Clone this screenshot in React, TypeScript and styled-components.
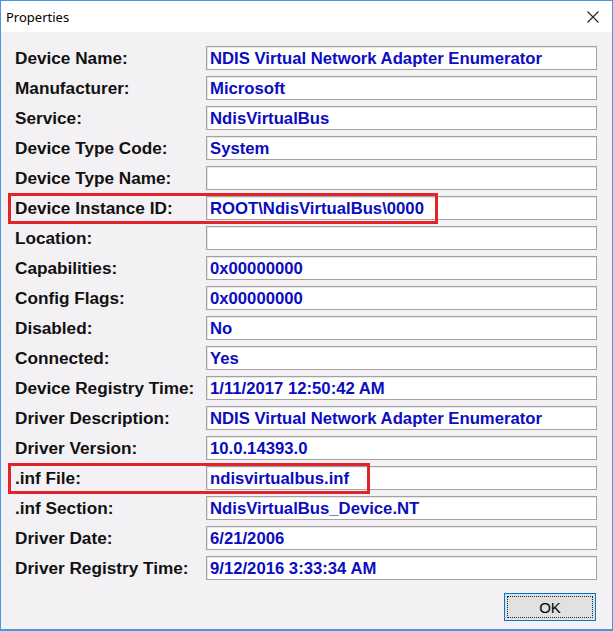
import React from "react";
import styled, { createGlobalStyle } from "styled-components";

const Global = createGlobalStyle`
  html, body { margin: 0; padding: 0; background: #ffffff; }
  #root { width: 613px; height: 631px; }
`;

const Window = styled.div`
  width: 613px;
  height: 631px;
  box-sizing: border-box;
  border: 1px solid #4a95e0;
  border-bottom-width: 2px;
  display: flex;
  flex-direction: column;
  background: #f4f1f4;
  font-family: "Liberation Sans", Arial, sans-serif;
`;

const TitleBar = styled.div`
  height: 31px;
  flex: none;
  background: #ffffff;
  display: flex;
  align-items: center;
  justify-content: space-between;
  padding: 0 13px 0 5px;
`;

const Title = styled.span`
  font-family: "Noto Sans", "Liberation Sans", sans-serif;
  font-size: 13px;
  color: #000;
`;

const CloseButton = styled.div`
  width: 12px;
  height: 12px;
  display: flex;
  align-items: center;
  justify-content: center;
`;

const Body = styled.div`
  flex: 1;
  display: flex;
  flex-direction: column;
  padding: 14px 15px 0 14px;
`;

const Form = styled.div`
  display: flex;
  flex-direction: column;
  gap: 6px;
`;

const Row = styled.div`
  position: relative;
  display: flex;
  align-items: center;
  height: 24px;
`;

const Label = styled.div`
  width: 191px;
  flex: none;
  padding-top: 1px;
  font-size: 17.2px;
  font-weight: bold;
  color: #111;
  white-space: nowrap;
`;

const ValueBox = styled.div`
  flex: 1;
  height: 24px;
  box-sizing: border-box;
  background: #ffffff;
  border: 1px solid #a3a3a3;
  box-shadow: inset 1px 1px 0 #e6e6e6;
  display: flex;
  align-items: center;
  padding: 1px 0 0 3px;
  font-size: 16.7px;
  font-weight: bold;
  color: #0c0cc0;
  white-space: nowrap;
  overflow: hidden;
`;

const Highlight = styled.div<{ $w: number }>`
  position: absolute;
  left: -7px;
  top: -3px;
  width: ${(p) => p.$w}px;
  height: 31px;
  box-sizing: border-box;
  border: 3px solid #e3222b;
  pointer-events: none;
`;

const Footer = styled.div`
  display: flex;
  justify-content: flex-end;
  padding-top: 13px;
  padding-right: 1px;
`;

const OkButton = styled.button`
  width: 92px;
  height: 28px;
  box-sizing: border-box;
  border: 1px solid #0078d7;
  background: #e1e1e1;
  padding: 2px;
  display: flex;
  margin: 0;
`;

const FocusRing = styled.span`
  flex: 1;
  border: 1px dotted #222;
  display: flex;
  align-items: center;
  justify-content: center;
  font-family: "Liberation Sans", Arial, sans-serif;
  font-size: 15px;
  color: #000;
`;

type Field = { label: string; value: string; hl?: number };

const fields: Field[] = [
  { label: "Device Name:", value: "NDIS Virtual Network Adapter Enumerator" },
  { label: "Manufacturer:", value: "Microsoft" },
  { label: "Service:", value: "NdisVirtualBus" },
  { label: "Device Type Code:", value: "System" },
  { label: "Device Type Name:", value: "" },
  { label: "Device Instance ID:", value: "ROOT\\NdisVirtualBus\\0000", hl: 430 },
  { label: "Location:", value: "" },
  { label: "Capabilities:", value: "0x00000000" },
  { label: "Config Flags:", value: "0x00000000" },
  { label: "Disabled:", value: "No" },
  { label: "Connected:", value: "Yes" },
  { label: "Device Registry Time:", value: "1/11/2017 12:50:42 AM" },
  { label: "Driver Description:", value: "NDIS Virtual Network Adapter Enumerator" },
  { label: "Driver Version:", value: "10.0.14393.0" },
  { label: ".inf File:", value: "ndisvirtualbus.inf", hl: 362 },
  { label: ".inf Section:", value: "NdisVirtualBus_Device.NT" },
  { label: "Driver Date:", value: "6/21/2006" },
  { label: "Driver Registry Time:", value: "9/12/2016 3:33:34 AM" },
];

export default function App() {
  return (
    <>
      <Global />
      <Window>
        <TitleBar>
          <Title>Properties</Title>
          <CloseButton>
            <svg width="12" height="12" viewBox="0 0 12 12">
              <path d="M0.5 0.5 L11.5 11.5 M11.5 0.5 L0.5 11.5" stroke="#222" strokeWidth="1.1" />
            </svg>
          </CloseButton>
        </TitleBar>
        <Body>
          <Form>
            {fields.map((f) => (
              <Row key={f.label}>
                <Label>{f.label}</Label>
                <ValueBox>{f.value}</ValueBox>
                {f.hl ? <Highlight $w={f.hl} /> : null}
              </Row>
            ))}
          </Form>
          <Footer>
            <OkButton>
              <FocusRing>OK</FocusRing>
            </OkButton>
          </Footer>
        </Body>
      </Window>
    </>
  );
}
